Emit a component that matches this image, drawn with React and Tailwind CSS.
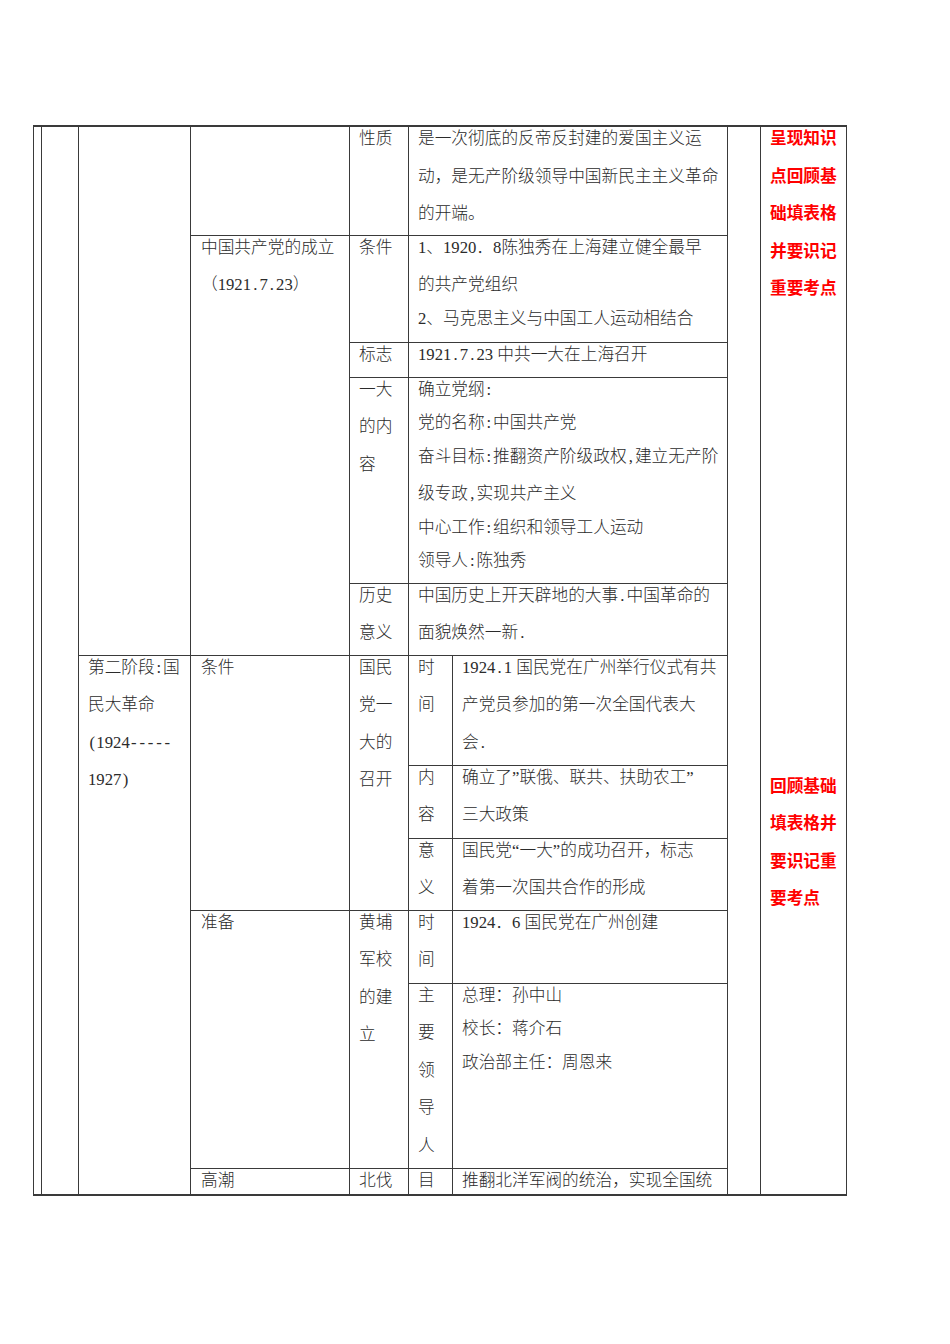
import React from "react";

const line = "border border-[#3a3a3a] align-top p-0";

// half-width ascii punctuation gets a fixed half-em cell, like the original's font
const fit = (s) =>
  s.split(/([.:,()\-])/).map((part, i) =>
    /^[.:,()\-]$/.test(part) ? (
      <span key={i} className="inline-block w-[0.5em] text-center">
        {part}
      </span>
    ) : (
      part
    )
  );

const Txt = ({ paras, pl = "pl-[9px]" }) => (
  <div className={`-mt-[7px] ${pl} leading-[37.5px] whitespace-nowrap`}>
    {paras.map((p, i) => (
      <div key={i} className={i ? "-mt-[4px]" : ""}>
        {p.map((l, j) => (
          <div key={j}>{fit(l)}</div>
        ))}
      </div>
    ))}
  </div>
);

const Red = ({ lines, className = "" }) => (
  <div className={className}>
    {lines.map((l, i) => (
      <div key={i}>{l}</div>
    ))}
  </div>
);

const App = () => {
  return (
    <div className="bg-white w-[950px] h-[1344px] pt-[125px] pl-[33px] font-['Liberation_Serif','Noto_Sans_CJK_SC',serif] text-[16.7px] text-[#2b2b2b] font-light">
      <table className="table-fixed border-collapse w-[813px] border-t-2 border-b-2 border-[#3a3a3a]">
        <colgroup>
          <col className="w-[8px]" />
          <col className="w-[37px]" />
          <col className="w-[112px]" />
          <col className="w-[159px]" />
          <col className="w-[59px]" />
          <col className="w-[44px]" />
          <col className="w-[275px]" />
          <col className="w-[33px]" />
          <col className="w-[86px]" />
        </colgroup>
        <tbody>
          <tr className="h-[109px]">
            <td className={line} rowSpan={11}></td>
            <td className={line} rowSpan={11}></td>
            <td className={line} rowSpan={5}></td>
            <td className={line}></td>
            <td className={line}>
              <Txt paras={[["性质"]]} />
            </td>
            <td className={line} colSpan={2}>
              <Txt
                paras={[
                  [
                    "是一次彻底的反帝反封建的爱国主义运",
                    "动，是无产阶级领导中国新民主主义革命",
                    "的开端。",
                  ],
                ]}
              />
            </td>
            <td className={line} rowSpan={11}></td>
            <td className={line} rowSpan={11}>
              <div className="-mt-[8px] pl-[9px] leading-[37.5px] whitespace-nowrap font-['Noto_Sans_CJK_SC',sans-serif] font-bold text-[#ff0000]">
                <Red lines={["呈现知识", "点回顾基", "础填表格", "并要识记", "重要考点"]} />
                <Red className="mt-[460px]" lines={["回顾基础", "填表格并", "要识记重", "要考点"]} />
              </div>
            </td>
          </tr>
          <tr className="h-[107px]">
            <td className={line} rowSpan={4}>
              <Txt pl="pl-[10px]" paras={[["中国共产党的成立", "（1921.7.23）"]]} />
            </td>
            <td className={line}>
              <Txt paras={[["条件"]]} />
            </td>
            <td className={line} colSpan={2}>
              <Txt
                paras={[
                  ["1、1920．8陈独秀在上海建立健全最早", "的共产党组织"],
                  ["2、马克思主义与中国工人运动相结合"],
                ]}
              />
            </td>
          </tr>
          <tr className="h-[35px]">
            <td className={line}>
              <Txt paras={[["标志"]]} />
            </td>
            <td className={line} colSpan={2}>
              <Txt paras={[["1921.7.23 中共一大在上海召开"]]} />
            </td>
          </tr>
          <tr className="h-[206px]">
            <td className={line}>
              <Txt paras={[["一大", "的内", "容"]]} />
            </td>
            <td className={line} colSpan={2}>
              <Txt
                paras={[
                  ["确立党纲:"],
                  ["党的名称:中国共产党"],
                  ["奋斗目标:推翻资产阶级政权,建立无产阶", "级专政,实现共产主义"],
                  ["中心工作:组织和领导工人运动"],
                  ["领导人:陈独秀"],
                ]}
              />
            </td>
          </tr>
          <tr className="h-[72px]">
            <td className={line}>
              <Txt paras={[["历史", "意义"]]} />
            </td>
            <td className={line} colSpan={2}>
              <Txt paras={[["中国历史上开天辟地的大事.中国革命的", "面貌焕然一新."]]} />
            </td>
          </tr>
          <tr className="h-[110px]">
            <td className={line} rowSpan={6}>
              <Txt paras={[["第二阶段:国", "民大革命", "(1924-----", "1927)"]]} />
            </td>
            <td className={line} rowSpan={3}>
              <Txt pl="pl-[10px]" paras={[["条件"]]} />
            </td>
            <td className={line} rowSpan={3}>
              <Txt paras={[["国民", "党一", "大的", "召开"]]} />
            </td>
            <td className={line}>
              <Txt paras={[["时", "间"]]} />
            </td>
            <td className={line}>
              <Txt
                paras={[["1924.1 国民党在广州举行仪式有共", "产党员参加的第一次全国代表大", "会."]]}
              />
            </td>
          </tr>
          <tr className="h-[73px]">
            <td className={line}>
              <Txt paras={[["内", "容"]]} />
            </td>
            <td className={line}>
              <Txt paras={[["确立了”联俄、联共、扶助农工”", "三大政策"]]} />
            </td>
          </tr>
          <tr className="h-[72px]">
            <td className={line}>
              <Txt paras={[["意", "义"]]} />
            </td>
            <td className={line}>
              <Txt paras={[["国民党“一大”的成功召开，标志", "着第一次国共合作的形成"]]} />
            </td>
          </tr>
          <tr className="h-[73px]">
            <td className={line} rowSpan={2}>
              <Txt pl="pl-[10px]" paras={[["准备"]]} />
            </td>
            <td className={line} rowSpan={2}>
              <Txt paras={[["黄埔", "军校", "的建", "立"]]} />
            </td>
            <td className={line}>
              <Txt paras={[["时", "间"]]} />
            </td>
            <td className={line}>
              <Txt paras={[["1924．6 国民党在广州创建"]]} />
            </td>
          </tr>
          <tr className="h-[185px]">
            <td className={line}>
              <Txt paras={[["主", "要", "领", "导", "人"]]} />
            </td>
            <td className={line}>
              <Txt paras={[["总理：孙中山"], ["校长：蒋介石"], ["政治部主任：周恩来"]]} />
            </td>
          </tr>
          <tr className="h-[27px]">
            <td className={line}>
              <div className="pl-[10px] leading-[24px] whitespace-nowrap">高潮</div>
            </td>
            <td className={line}>
              <div className="pl-[9px] leading-[24px] whitespace-nowrap">北伐</div>
            </td>
            <td className={line}>
              <div className="pl-[9px] leading-[24px] whitespace-nowrap">目</div>
            </td>
            <td className={line}>
              <div className="pl-[9px] leading-[24px] whitespace-nowrap">推翻北洋军阀的统治，实现全国统</div>
            </td>
          </tr>
        </tbody>
      </table>
    </div>
  );
};

export default App;
